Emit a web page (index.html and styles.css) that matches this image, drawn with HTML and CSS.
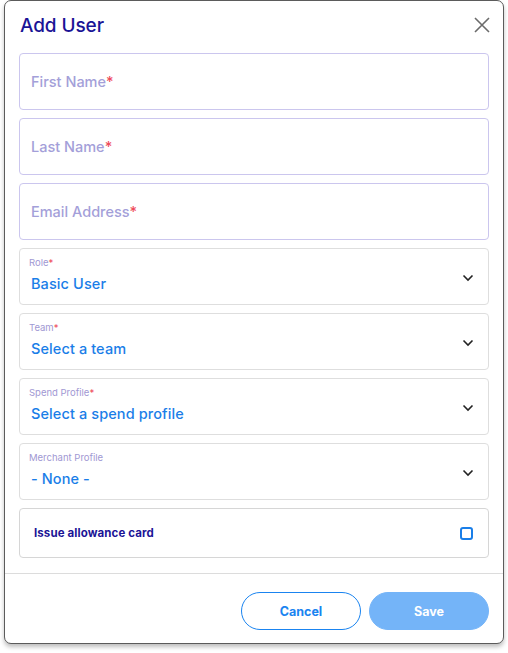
FILE: index.html
```html
<!DOCTYPE html>
<html lang="en">
<head>
<meta charset="utf-8">
<title>Add User</title>
<link rel="stylesheet" href="styles.css">
</head>
<body>
<div class="modal">
  <div class="header">
    <h1 class="title">Add User</h1>
    <button class="close" aria-label="Close">
      <svg width="18" height="18" viewBox="0 0 18 18"><path d="M2 2L16 16M16 2L2 16" stroke="#6b6b6b" stroke-width="1.6" fill="none"/></svg>
    </button>
  </div>
  <div class="fields">
    <div class="field text"><span class="ph">First Name<span class="req">*</span></span></div>
    <div class="field text"><span class="ph">Last Name<span class="req">*</span></span></div>
    <div class="field text"><span class="ph">Email Address<span class="req">*</span></span></div>
    <div class="field select">
      <div class="sel-body"><span class="label">Role<span class="req">*</span></span><span class="value">Basic User</span></div>
      <svg class="chev" width="12" height="8" viewBox="0 0 12 8"><path d="M1.5 1.5L6 6L10.5 1.5" stroke="#222" stroke-width="1.6" fill="none"/></svg>
    </div>
    <div class="field select">
      <div class="sel-body"><span class="label">Team<span class="req">*</span></span><span class="value">Select a team</span></div>
      <svg class="chev" width="12" height="8" viewBox="0 0 12 8"><path d="M1.5 1.5L6 6L10.5 1.5" stroke="#222" stroke-width="1.6" fill="none"/></svg>
    </div>
    <div class="field select">
      <div class="sel-body"><span class="label">Spend Profile<span class="req">*</span></span><span class="value">Select a spend profile</span></div>
      <svg class="chev" width="12" height="8" viewBox="0 0 12 8"><path d="M1.5 1.5L6 6L10.5 1.5" stroke="#222" stroke-width="1.6" fill="none"/></svg>
    </div>
    <div class="field select">
      <div class="sel-body"><span class="label">Merchant Profile</span><span class="value">- None -</span></div>
      <svg class="chev" width="12" height="8" viewBox="0 0 12 8"><path d="M1.5 1.5L6 6L10.5 1.5" stroke="#222" stroke-width="1.6" fill="none"/></svg>
    </div>
    <div class="field check">
      <span class="check-label">Issue allowance card</span>
      <span class="box"></span>
    </div>
  </div>
  <div class="footer">
    <button class="btn cancel">Cancel</button>
    <button class="btn save">Save</button>
  </div>
</div>
</body>
</html>
```
FILE: styles.css
```css
* { box-sizing: border-box; }
html, body { margin: 0; padding: 0; background: #ffffff; }
body {
  font-family: "Inter", "Lato", "Liberation Sans", sans-serif;
  width: 508px;
  height: 653px;
  overflow: hidden;
}
.modal {
  margin: 0 0 0 4px;
  width: 500px;
  height: 644px;
  background: #fff;
  border: 1px solid #5b5b5b;
  border-radius: 7px;
  box-shadow: 0 3px 4px rgba(0,0,0,0.25);
  display: flex;
  flex-direction: column;
}
.header {
  height: 52px;
  display: flex;
  align-items: center;
  justify-content: space-between;
  padding: 0 12px 4px 15px;
}
.title {
  margin: 0;
  font-size: 19px;
  font-weight: 500;
  color: #1b1496;
  letter-spacing: -0.1px;
}
.close {
  border: 0;
  background: none;
  padding: 0;
  width: 18px;
  height: 18px;
  display: flex;
  cursor: pointer;
}
.fields {
  padding: 0 14px 15px 14px;
  display: flex;
  flex-direction: column;
  gap: 8px;
  border-bottom: 1px solid #dcdcdc;
}
.field {
  height: 57px;
  border-radius: 4px;
  display: flex;
  align-items: center;
  padding: 0 11px;
}
.field.text {
  border: 1px solid #cbc6ee;
}
.ph {
  font-size: 14.5px;
  line-height: 18px;
  color: #a49fd9;
  font-weight: 500;
  margin-top: 1px;
}
.req { color: #ee4a5a; }
.field.select {
  border: 1px solid #dedede;
  justify-content: space-between;
  align-items: flex-start;
  padding: 8px 14px 0 9px;
}
.sel-body {
  display: flex;
  flex-direction: column;
  gap: 6px;
}
.label {
  font-size: 9.5px;
  line-height: 12px;
  color: #9f98d3;
}
.value {
  font-size: 14.5px;
  line-height: 18px;
  color: #1a7ee8;
  font-weight: 500;
  padding-left: 2px;
  letter-spacing: 0.1px;
}
.chev { flex: none; margin-top: 17px; }
.field.check {
  height: 50px;
  border: 1px solid #d6d6d6;
  justify-content: space-between;
  padding: 0 14px 0 14px;
}
.check-label {
  font-size: 11.5px;
  font-weight: 700;
  color: #1b1496;
  letter-spacing: 0.1px;
}
.box {
  width: 13px;
  height: 13px;
  border: 2px solid #1a7ee8;
  border-radius: 3px;
  margin-right: 1px;
}
.footer {
  display: flex;
  justify-content: flex-end;
  gap: 8px;
  padding: 18px 14px 0 14px;
}
.btn {
  width: 120px;
  height: 38px;
  border-radius: 19px;
  font-family: inherit;
  font-size: 12.5px;
  font-weight: 700;
  cursor: pointer;
}
.cancel {
  background: #fff;
  border: 1px solid #1a84f0;
  color: #1a84f0;
}
.save {
  background: #74b4f8;
  border: 1px solid #74b4f8;
  color: #ffffff;
}
```
